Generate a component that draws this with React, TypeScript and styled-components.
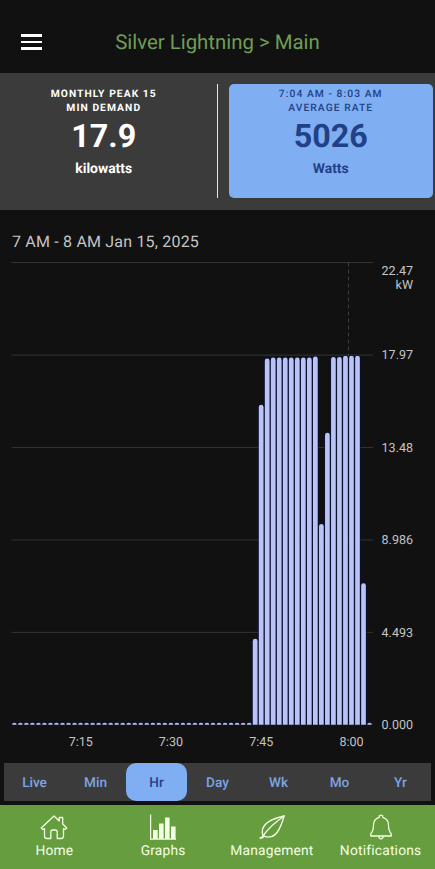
import React from 'react';
import styled, {createGlobalStyle, css} from 'styled-components';

const colors = {
	background: '#111111',
	panel: '#3b3b3c',
	blue: '#80aef3',
	tabText: '#7da4e2',
	navy: '#1f4287',
	green: '#669d3f',
	title: '#6f9d57',
	bar: '#b9c3f6',
	barEdge: '#0c1237',
	grid: '#343434',
	label: '#c4c4c4',
};

const GlobalStyle = createGlobalStyle`
  * {
    box-sizing: border-box;
  }
  body {
    margin: 0;
    background: ${colors.background};
    font-family: Roboto, "Liberation Sans", sans-serif;
    text-rendering: geometricPrecision;
  }
  button {
    padding: 0;
    border: 0;
    background: none;
    font: inherit;
    color: inherit;
    text-rendering: inherit;
  }
`;

const Screen = styled.div`
  display: flex;
  flex-direction: column;
  width: 435px;
  height: 869px;
  overflow: hidden;
  background: ${colors.background};
`;

const Header = styled.header`
  display: grid;
  grid-template-columns: 63px 1fr 63px;
  align-items: center;
  height: 73px;
  padding-top: 11px;
`;

const MenuButton = styled.button`
  display: flex;
  flex-direction: column;
  gap: 4px;
  width: 21px;
  margin-left: 21px;
`;

const MenuLine = styled.span`
  height: 2.4px;
  background: #fff;
`;

const Title = styled.h1`
  margin: 0;
  color: ${colors.title};
  font-size: 20.4px;
  font-weight: 400;
  line-height: 25px;
  text-align: center;
`;

const Summary = styled.section`
  display: flex;
  height: 137px;
  padding: 11px 2px 12px 0;
  background: ${colors.panel};
`;

const Stat = styled.div<{$active?: boolean}>`
  display: flex;
  flex-direction: column;
  align-items: center;
  color: #fff;
  font-weight: 700;
  width: 208px;
  ${({$active}) => $active && css`
    width: 205px;
    margin-left: 11px;
    border-radius: 5px;
    background: ${colors.blue};
    color: ${colors.navy};
  `};
`;

const StatTitle = styled.span<{$medium?: boolean}>`
  padding-top: 2.6px;
  font-size: 10.3px;
  font-weight: ${({$medium}) => $medium ? 500 : 700};
  line-height: 14.5px;
  letter-spacing: 1.05px;
  text-align: center;
  white-space: pre-line;
`;

const StatValue = styled.span`
  margin-top: 1.4px;
  font-size: 32.3px;
  line-height: 38px;
`;

const StatUnit = styled.span`
  margin-top: 6px;
  font-size: 13.9px;
  line-height: 16px;
`;

const Separator = styled.div`
  width: 1px;
  margin-left: 9px;
  background: #dfe5ec;
`;

const ChartTitle = styled.h2`
  height: 45px;
  margin: 0;
  padding: 22px 0 0 12px;
  color: ${colors.label};
  font-size: 16px;
  font-weight: 400;
  line-height: 20px;
  letter-spacing: 0.19px;
`;

const ChartSvg = styled.svg`
  display: block;
  flex: none;
  text {
    fill: ${colors.label};
    font-size: 12.5px;
  }
`;

const RangeTabs = styled.div`
  display: grid;
  grid-template-columns: repeat(7, 1fr);
  height: 38px;
  margin: 8px 4px 4px;
  background: ${colors.panel};
`;

const RangeTab = styled.button<{$active?: boolean}>`
  padding-top: 2px;
  color: ${colors.tabText};
  font-size: 13.6px;
  font-weight: 500;
  ${({$active}) => $active && css`
    border-radius: 10px;
    background: ${colors.blue};
    color: ${colors.navy};
  `};
`;

const BottomNav = styled.nav`
  display: grid;
  grid-template-columns: repeat(4, 1fr);
  flex: 1;
  background: ${colors.green};
`;

const NavItem = styled.button`
  display: flex;
  flex-direction: column;
  align-items: center;
  padding-top: 9px;
  color: #f3ffe3;
  font-size: 13.8px;
  line-height: 16px;
  letter-spacing: 0.2px;
  svg {
    display: block;
    margin-bottom: 3px;
  }
`;

// One reading per minute, in kW
const readings: number[] = [
	...Array(40).fill(0.1),
	4.18, 15.55,
	17.8, 17.85, 17.85, 17.85, 17.85, 17.85, 17.85, 17.85, 17.9,
	9.76, 14.2,
	17.88, 17.88, 17.94, 17.94, 17.94,
	6.88, 0.1,
];

const MAX_KW = 22.47;
const PLOT = {left: 11.5, right: 373, top: 7.5, bottom: 469.8};
const STEP = 6.02;
const BAR_WIDTH = 4.7;

const ticks = ['22.47', '17.97', '13.48', '8.986', '4.493', '0.000'];
const times = [
	{label: '7:15', x: 80.7},
	{label: '7:30', x: 170.9},
	{label: '7:45', x: 261.3},
	{label: '8:00', x: 351.6},
];

const toY = (kw: number) => PLOT.bottom - (kw / MAX_KW) * (PLOT.bottom - PLOT.top);

const barPath = (x: number, kw: number) => {
	const y = toY(kw);
	const r = Math.min(BAR_WIDTH / 2, PLOT.bottom - y);
	return `M${x} ${PLOT.bottom}V${y + r}a${BAR_WIDTH / 2} ${r} 0 0 1 ${BAR_WIDTH} 0V${PLOT.bottom}z`;
};

const PowerChart = () => (
	<ChartSvg width={435} height={500} viewBox="0 0 435 500">
		{ticks.slice(0, -1).map((tick) => (
			<path key={tick} d={`M${PLOT.left} ${toY(Number(tick))}H${PLOT.right}`} stroke={colors.grid}/>
		))}
		<path d={`M348.5 ${PLOT.top}V101`} stroke="#3d3d3d" strokeDasharray="4 3"/>
		{readings.map((kw, i) => (
			<path
				key={i}
				d={barPath(12 + i * STEP, kw)}
				fill={kw < 1 ? '#bcc4d3' : colors.bar}
				stroke={colors.barEdge}
				strokeWidth={1.4}
				paintOrder="stroke"
			/>
		))}
		{ticks.map((tick, i) => (
			<text key={tick} x={413} y={i === 0 ? 19.5 : toY(Number(tick)) + 4.3} textAnchor="end">{tick}</text>
		))}
		<text x={413} y={34} textAnchor="end">kW</text>
		{times.map(({label, x}) => (
			<text key={label} x={x} y={491.3} textAnchor="middle">{label}</text>
		))}
	</ChartSvg>
);

const HomeIcon = () => (
	<svg width="28" height="26" viewBox="0 0 28 26" fill="none" stroke="currentColor" strokeWidth="1.3" strokeLinejoin="round">
		<path d="M14 2 1.2 14q1.5 2.2 3.3.6V22q0 2.500 2.300 2.500h4V18q0-2 2-2h2.400q2 0 2 2v6.500h4Q23.500 24.500 23.500 22v-7.400q1.800 1.600 3.300-.6L22.700 10V3.500h-3.500V7z"/>
	</svg>
);

const GraphsIcon = () => (
	<svg width="28" height="26" viewBox="0 0 28 26" fill="currentColor">
		<path d="M1 .5h1.200v25.200H1zM2 24.600h25v1.200H2zM4 16h4.700v9H4zM10 9.500h4.600V25H10zM16 3.500h4.600V25H16zM22 12.500h4.600V25H22z"/>
	</svg>
);

const LeafIcon = () => (
	<svg width="28" height="26" viewBox="0 0 28 26" fill="none" stroke="currentColor" strokeWidth="1.3" strokeLinejoin="round" strokeLinecap="round">
		<path d="M26 2C17 4 6.500 7.500 4.500 15.500c-.6 2.500-.2 4.500.7 6C8 23.800 15 24 19 18.500 23 13 24.500 8 26 2z"/>
		<path d="M2 24q1.800-.2 3.200-2.500Q12 12 26 2M2 24h2l2.200-1.700"/>
	</svg>
);

const BellIcon = () => (
	<svg width="28" height="26" viewBox="0 0 28 26" fill="none" stroke="currentColor" strokeWidth="1.3" strokeLinejoin="round">
		<path d="M12.300 3.300V1.800q1.700-1.100 3.400 0v1.500c4 1 5.800 4 5.800 8 0 4.500.8 6.500 2.700 8.300V22H3.800v-2.400c1.900-1.800 2.700-3.800 2.700-8.300 0-4 1.800-7 5.800-8z"/>
		<path d="M11.700 22q.3 2.800 2.300 2.800t2.300-2.800"/>
	</svg>
);

const ranges = ['Live', 'Min', 'Hr', 'Day', 'Wk', 'Mo', 'Yr'];

const navItems = [
	{label: 'Home', Icon: HomeIcon},
	{label: 'Graphs', Icon: GraphsIcon},
	{label: 'Management', Icon: LeafIcon},
	{label: 'Notifications', Icon: BellIcon},
];

const App = () => {
	const [range, setRange] = React.useState('Hr');

	return (
		<>
			<GlobalStyle/>
			<Screen>
				<Header>
					<MenuButton aria-label="Menu">
						<MenuLine/>
						<MenuLine/>
						<MenuLine/>
					</MenuButton>
					<Title>Silver Lightning &gt; Main</Title>
				</Header>
				<Summary>
					<Stat>
						<StatTitle>{'MONTHLY PEAK 15\nMIN DEMAND'}</StatTitle>
						<StatValue>17.9</StatValue>
						<StatUnit>kilowatts</StatUnit>
					</Stat>
					<Separator/>
					<Stat $active>
						<StatTitle $medium>{'7:04 AM - 8:03 AM\nAVERAGE RATE'}</StatTitle>
						<StatValue>5026</StatValue>
						<StatUnit>Watts</StatUnit>
					</Stat>
				</Summary>
				<ChartTitle>7 AM - 8 AM Jan 15, 2025</ChartTitle>
				<PowerChart/>
				<RangeTabs>
					{ranges.map((name) => (
						<RangeTab key={name} $active={name === range} onClick={() => setRange(name)}>{name}</RangeTab>
					))}
				</RangeTabs>
				<BottomNav>
					{navItems.map(({label, Icon}) => (
						<NavItem key={label}>
							<Icon/>
							{label}
						</NavItem>
					))}
				</BottomNav>
			</Screen>
		</>
	);
};

export default App;
